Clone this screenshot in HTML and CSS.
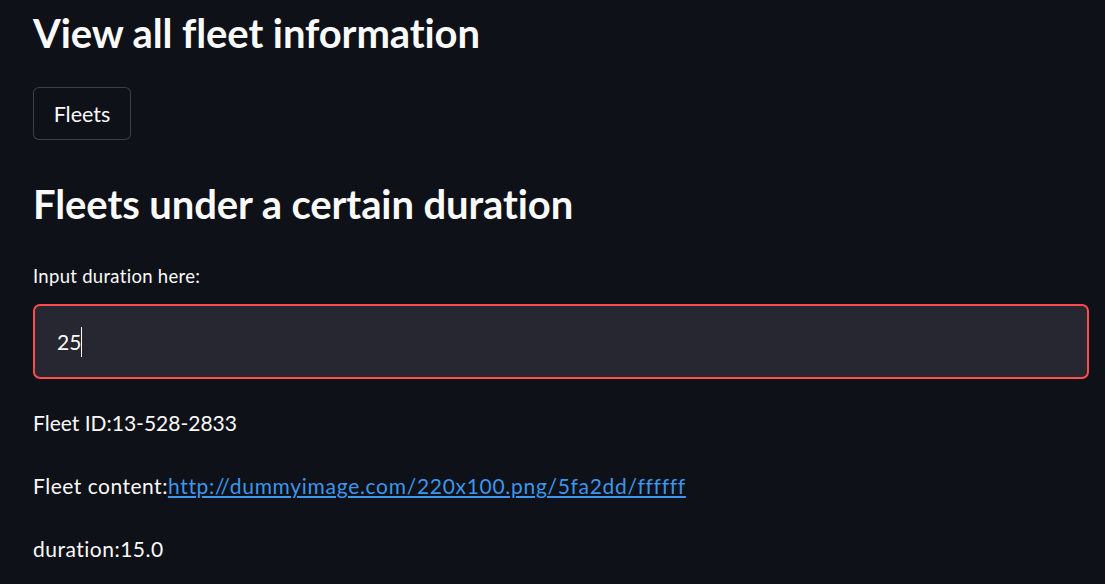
FILE: index.html
```html
<!DOCTYPE html>
<html>
<head>
<meta charset="utf-8">
<link rel="stylesheet" href="styles.css">
</head>
<body>
<main class="page">
  <h2 class="title first">View all fleet information</h2>
  <div class="btn-row"><button class="btn">Fleets</button></div>
  <h2 class="title second">Fleets under a certain duration</h2>
  <label class="label">Input duration here:</label>
  <div class="input"><span class="value">25</span><span class="caret"></span></div>
  <p class="line">Fleet ID:13-528-2833</p>
  <p class="line">Fleet content:<a class="link" href="#">http://dummyimage.com/220x100.png/5fa2dd/ffffff</a></p>
  <p class="line">duration:15.0</p>
</main>
</body>
</html>
```
FILE: styles.css
```css
html, body {
  margin: 0;
  padding: 0;
  background: #0e1117;
  color: #fafafa;
  font-family: "Lato", "Liberation Sans", sans-serif;
}
.page {
  padding: 0 16px 0 33px;
  display: flex;
  flex-direction: column;
  align-items: flex-start;
}
.title {
  margin: 0;
  font-weight: 700;
  font-size: 40px;
  line-height: 48px;
  letter-spacing: -0.1px;
}
.first { margin-top: 9px; }
.btn-row { margin-top: 30px; }
.btn {
  font-family: inherit;
  font-size: 21.5px;
  color: #fafafa;
  background: #0e1117;
  border: 1px solid rgba(250,250,250,0.2);
  border-radius: 6px;
  width: 98px;
  height: 53px;
  padding: 0;
}
.second { margin-top: 40px; }
.label {
  margin-top: 37px;
  font-size: 18.5px;
  letter-spacing: 0.3px;
  line-height: 22px;
}
.input {
  margin-top: 17px;
  box-sizing: border-box;
  width: 1056px;
  height: 75px;
  background: #262730;
  border: 2px solid #ff4b4b;
  border-radius: 7px;
  display: flex;
  align-items: center;
  padding-left: 22px;
  font-size: 21px;
}
.caret {
  display: inline-block;
  width: 1px;
  height: 30px;
  background: #fafafa;
  margin-left: 0;
}
.line {
  margin: 0;
  font-size: 21px;
  letter-spacing: 0.5px;
  line-height: 27px;
}
.input + .line { margin-top: 30px; }
.line + .line { margin-top: 36px; }
.line:first-of-type { letter-spacing: 0; }
.link { color: #3b96ec; text-decoration: underline; letter-spacing: 0.7px; }
```
